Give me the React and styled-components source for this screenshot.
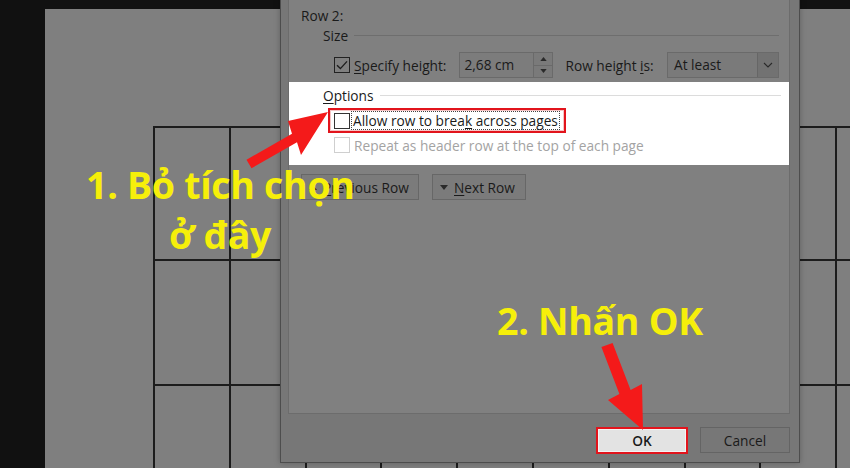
import React from 'react'
import styled, { createGlobalStyle } from 'styled-components'

const GlobalStyle = createGlobalStyle`
  html, body {
    margin: 0;
    padding: 0;
    background: #111;
  }
  body {
    font-family: 'Open Sans', 'Noto Sans', sans-serif;
  }
  * {
    box-sizing: border-box;
  }
`

// Desktop / document behind the dialog
const Screen = styled.div`
  position: relative;
  width: 850px;
  height: 468px;
  overflow: hidden;
  background: #111;
  padding: 9px 0 0 45px;
`

const Page = styled.div`
  height: 100%;
  background: #7f7f7f;
  padding: 117px 0 0 108px;
`

const Table = styled.div`
  display: grid;
  grid-template-columns: repeat(10, 75.8px);
  grid-template-rows: 133px 125px 129px;
  border-top: 2px solid #1c1c1c;
  border-left: 2px solid #1c1c1c;
`

const Cell = styled.div`
  border-right: 2px solid #1c1c1c;
  border-bottom: 2px solid #1c1c1c;
`

// Dialog window
const Dialog = styled.div`
  position: absolute;
  left: 280px;
  top: -20px;
  width: 520px;
  height: 483px;
  background: #777;
  border: 1px solid #4d4d4d;
  padding: 0 9px 0 7px;
  display: flex;
  flex-direction: column;
  color: #1a1a1a;
  font-size: 13.7px;
  box-shadow: 0 0 6px rgba(0, 0, 0, 0.25);
`

const Panel = styled.div`
  flex: 1;
  background: #808080;
  border: 1px solid #6c6c6c;
  padding-top: 25px;
  display: flex;
  flex-direction: column;
`

const RowLabel = styled.div`
  padding-left: 12px;
  line-height: 18px;
  height: 18px;
`

const SectionHeader = styled.div`
  display: flex;
  align-items: center;
  gap: 6px;
  height: 18px;
  margin-top: ${p => p.$top || 0}px;
  padding: 0 ${p => p.$right || 10}px 0 34px;

  &::after {
    content: '';
    flex: 1;
    height: 1px;
    background: ${p => p.$line};
  }
`

const Key = styled.span`
  text-decoration: underline;
  text-underline-offset: 2px;
`

const SizeRow = styled.div`
  display: flex;
  align-items: center;
  height: 26px;
  margin-top: 8px;
  padding: 0 10px 0 45px;
`

const Box = styled.span`
  display: inline-flex;
  align-items: center;
  justify-content: center;
  flex: none;
  width: 16px;
  height: 16px;
  border: 1px solid ${p => p.$border};
  background: ${p => p.$bg || 'transparent'};
`

const Label = styled.span`
  margin-left: ${p => p.$left || 4}px;
  white-space: nowrap;
  color: ${p => p.$color || 'inherit'};
`

const NumberField = styled.div`
  display: flex;
  width: 94px;
  height: 26px;
  margin-left: 13px;
  border: 1px solid #6a6a6a;
  background: #7c7c7c;
`

const FieldText = styled.span`
  flex: 1;
  padding-left: 4px;
  line-height: 24px;
`

const Spinner = styled.div`
  width: 19px;
  display: flex;
  flex-direction: column;
  border-left: 1px solid #6a6a6a;
  background: #7a7a7a;
`

const SpinHalf = styled.div`
  flex: 1;
  display: flex;
  align-items: center;
  justify-content: center;
  & + & {
    border-top: 1px solid #6a6a6a;
  }
`

const Select = styled.div`
  display: flex;
  width: 112px;
  height: 26px;
  margin-left: auto;
  border: 1px solid #6a6a6a;
  background: #7a7a7a;
`

const SelectText = styled.span`
  flex: 1;
  padding-left: 6px;
  line-height: 24px;
`

const SelectArrow = styled.div`
  width: 21px;
  display: flex;
  align-items: center;
  justify-content: center;
  border-left: 1px solid #666;
  background: #727272;
`

// Undimmed highlighted options block
const Highlight = styled.div`
  margin-top: 4px;
  background: #fff;
  padding: 4px 0 11px;
  color: #1a1a1a;
`

const FocusFrame = styled.div`
  display: inline-flex;
  align-items: center;
  height: 25px;
  margin: 4px 0 0 39px;
  padding: 0 5px 0 4px;
  border: 2px solid #e2141c;
  box-shadow: inset 0 0 0 1px #f6c4c4;
`

const FocusText = styled.span`
  margin-left: 2px;
  padding: 0 1px;
  outline: 1px dotted #444;
  line-height: 17px;
  white-space: nowrap;
`

const OptionRow = styled.div`
  display: flex;
  align-items: center;
  height: 18px;
  margin-top: 3px;
  padding-left: 45px;
`

const NavRow = styled.div`
  display: flex;
  gap: 13px;
  margin-top: 9px;
  padding-left: 12px;
`

const NavButton = styled.div`
  display: flex;
  align-items: center;
  gap: 6px;
  width: ${p => p.$width}px;
  height: 26px;
  padding-left: 7px;
  background: #7b7b7b;
  border: 1px solid #676767;
  white-space: nowrap;
`

const Footer = styled.div`
  height: 48px;
  display: flex;
  justify-content: flex-end;
  align-items: flex-start;
  gap: 12px;
  padding-top: 13px;
`

const FooterButton = styled.div`
  width: ${p => p.$width}px;
  height: ${p => (p.$primary ? 27 : 26)}px;
  display: flex;
  align-items: center;
  justify-content: center;
  background: ${p => (p.$primary ? '#e3e3e3' : '#777')};
  border: ${p => (p.$primary ? '2px solid #e2141c' : '1px solid #646464')};
  box-shadow: ${p => (p.$primary ? 'inset 0 0 0 1px #f3f3f3' : 'none')};
  font-weight: ${p => (p.$primary ? 600 : 400)};
  color: #1a1a1a;
`

// Tutorial annotations on top of everything
const Note = styled.div`
  position: absolute;
  left: ${p => p.$x}px;
  top: ${p => p.$y}px;
  width: ${p => p.$w}px;
  text-align: center;
  font-family: 'Open Sans', 'Noto Sans', sans-serif;
  font-weight: 700;
  font-size: 37.5px;
  line-height: 50px;
  letter-spacing: -0.3px;
  color: #f6ef0a;
  white-space: nowrap;
`

const Arrows = styled.svg`
  position: absolute;
  left: 0;
  top: 0;
  pointer-events: none;
`

const Check = () => (
  <svg width="14" height="14" viewBox="0 0 14 14">
    <path d="M2 7.2 L5.4 10.6 L12 3.4" fill="none" stroke="#1d1d1d" strokeWidth="1.4" />
  </svg>
)

const Tri = ({ up, color = '#2a2a2a', w = 8, h = 5 }) => (
  <svg width={w} height={h} viewBox="0 0 8 5">
    <path d={up ? 'M0 5 L4 0 L8 5 Z' : 'M0 0 L8 0 L4 5 Z'} fill={color} />
  </svg>
)

const Chevron = () => (
  <svg width="10" height="6" viewBox="0 0 10 6">
    <path d="M1 1 L5 5 L9 1" fill="none" stroke="#2a2a2a" strokeWidth="1.1" />
  </svg>
)

const cells = Array.from({ length: 30 })

export default function App() {
  return (
    <>
      <GlobalStyle />
      <Screen>
        <Page>
          <Table>
            {cells.map((_, i) => (
              <Cell key={i} />
            ))}
          </Table>
        </Page>

        <Dialog>
          <Panel>
            <RowLabel>Row 2:</RowLabel>
            <SectionHeader $top={1} $line="#6e6e6e">Size</SectionHeader>
            <SizeRow>
              <Box $border="#222">
                <Check />
              </Box>
              <Label>
                <Key>S</Key>pecify height:
              </Label>
              <NumberField>
                <FieldText>2,68 cm</FieldText>
                <Spinner>
                  <SpinHalf>
                    <Tri up w={7} h={4} />
                  </SpinHalf>
                  <SpinHalf>
                    <Tri w={7} h={4} />
                  </SpinHalf>
                </Spinner>
              </NumberField>
              <Label $left={12}>
                Row height <Key>i</Key>s:
              </Label>
              <Select>
                <SelectText>At least</SelectText>
                <SelectArrow>
                  <Chevron />
                </SelectArrow>
              </Select>
            </SizeRow>

            <Highlight>
              <SectionHeader $line="#dcdcdc" $right={8}>
                <span>
                  <Key>O</Key>ptions
                </span>
              </SectionHeader>
              <FocusFrame>
                <Box $border="#333" $bg="#fff" />
                <FocusText>
                  Allow row to brea<Key>k</Key> across pages
                </FocusText>
              </FocusFrame>
              <OptionRow>
                <Box $border="#cfcfcf" />
                <Label $color="#a3a3a3">Repeat as header row at the top of each page</Label>
              </OptionRow>
            </Highlight>

            <NavRow>
              <NavButton $width={118}>
                <Tri up />
                <span>
                  <Key>P</Key>revious Row
                </span>
              </NavButton>
              <NavButton $width={94}>
                <Tri />
                <span>
                  <Key>N</Key>ext Row
                </span>
              </NavButton>
            </NavRow>
          </Panel>
          <Footer>
            <FooterButton $primary $width={92}>OK</FooterButton>
            <FooterButton $width={90}>Cancel</FooterButton>
          </Footer>
        </Dialog>

        <Arrows width="850" height="468" viewBox="0 0 850 468">
          <polygon
            points="246.5,159.7 292,133.7 288,121 328,112 301,155 297,142.3 251.5,168.3"
            fill="#f41a1a"
          />
          <polygon
            points="601.4,347.1 612.6,342.9 630.6,389.9 642,384 643,430 608,400 619.4,394.1"
            fill="#f41a1a"
          />
        </Arrows>

        <Note $x={86} $y={160} $w={268}>
          1. Bỏ tích chọn
          <br />
          ở đây
        </Note>
        <Note $x={497} $y={296} $w={205}>
          2. Nhấn OK
        </Note>
      </Screen>
    </>
  )
}
